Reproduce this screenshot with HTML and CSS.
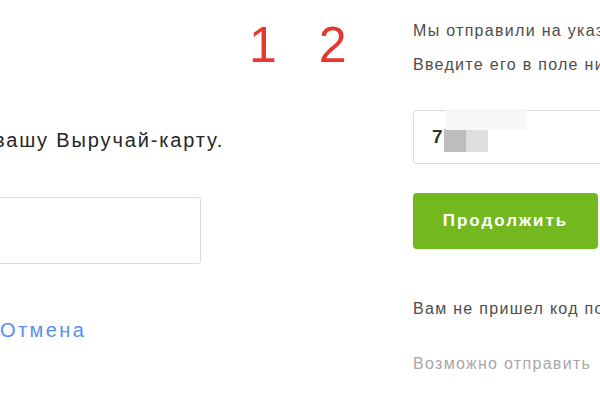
FILE: index.html
```html
<!DOCTYPE html>
<html lang="ru">
<head>
<meta charset="utf-8">
<title>Выручай-карта</title>
<link rel="stylesheet" href="styles.css">
</head>
<body>
<div class="page">
  <section class="col-left">
    <p class="lead">вашу Выручай-карту.</p>
    <div class="field field-left"></div>
    <a class="cancel" href="#">Отмена</a>
  </section>
  <div class="steps">
    <span class="step step-1">1</span>
    <span class="step step-2">2</span>
  </div>
  <section class="col-right">
    <p class="info">Мы отправили на указ</p>
    <p class="info">Введите его в поле ни</p>
    <div class="field field-right">
      <span class="masked-top"></span>
      <span class="digit">7</span>
      <span class="mask mask-dark"></span>
      <span class="mask mask-light"></span>
    </div>
    <button class="btn" type="button">Продолжить</button>
    <p class="note">Вам не пришел код по</p>
    <p class="note muted">Возможно отправить</p>
  </section>
</div>
</body>
</html>
```

FILE: styles.css
```css
html, body {
  margin: 0;
  padding: 0;
  background: #ffffff;
}
body {
  width: 600px;
  height: 400px;
  overflow: hidden;
  font-family: "Liberation Sans", Arial, sans-serif;
}
.page {
  display: flex;
  width: 600px;
  height: 400px;
  overflow: hidden;
}
.col-left {
  flex: none;
  width: 221px;
  margin-left: -20px;
  padding-top: 128px;
  display: flex;
  flex-direction: column;
  align-items: flex-start;
}
.lead {
  margin: 0 0 0 14px;
  font-size: 20px;
  line-height: 24px;
  letter-spacing: 1.85px;
  color: #262626;
  white-space: nowrap;
}
.field {
  box-sizing: border-box;
  border: 1px solid #dcdcdc;
  border-radius: 3px;
  background: #fff;
}
.field-left {
  width: 221px;
  height: 67px;
  margin-top: 45px;
}
.cancel {
  margin: 54px 0 0 20px;
  font-size: 20px;
  line-height: 24px;
  letter-spacing: 2.4px;
  color: #5a8ef0;
  text-decoration: none;
}
.steps {
  flex: none;
  width: 212px;
  display: flex;
  align-items: flex-start;
  padding-top: 20px;
  box-sizing: border-box;
  padding-left: 48px;
  gap: 42px;
}
.step {
  font-size: 50px;
  line-height: 50px;
  color: #e5382f;
}
.col-right {
  flex: none;
  width: 187px;
  padding-top: 14px;
  display: flex;
  flex-direction: column;
  align-items: flex-start;
}
.info, .note {
  margin: 0;
  font-size: 16px;
  line-height: 34px;
  letter-spacing: 1.3px;
  color: #4d4d4d;
  white-space: nowrap;
}
.field-right {
  position: relative;
  width: 200px;
  height: 54px;
  margin-top: 28px;
  display: flex;
  align-items: center;
  padding-left: 18px;
}
.digit {
  font-size: 19px;
  font-weight: bold;
  color: #333;
}
.mask {
  width: 22px;
  height: 23px;
  margin-top: 6px;
}
.mask-dark { background: #bdbdbd; margin-left: 1px; }
.mask-light { background: #dedede; }
.masked-top {
  position: absolute;
  left: 32px;
  top: -2px;
  width: 80px;
  height: 21px;
  background: #f7f7f7;
}
.btn {
  flex: none;
  width: 185px;
  height: 56px;
  margin-top: 29px;
  border: none;
  border-radius: 4px;
  background: #72b81e;
  color: #fff;
  font-family: "Liberation Sans", Arial, sans-serif;
  font-size: 17px;
  font-weight: bold;
  letter-spacing: 2px;
  cursor: pointer;
}
.note {
  margin-top: 43px;
}
.note.muted {
  margin-top: 21px;
  color: #a8a8a8;
}
```
